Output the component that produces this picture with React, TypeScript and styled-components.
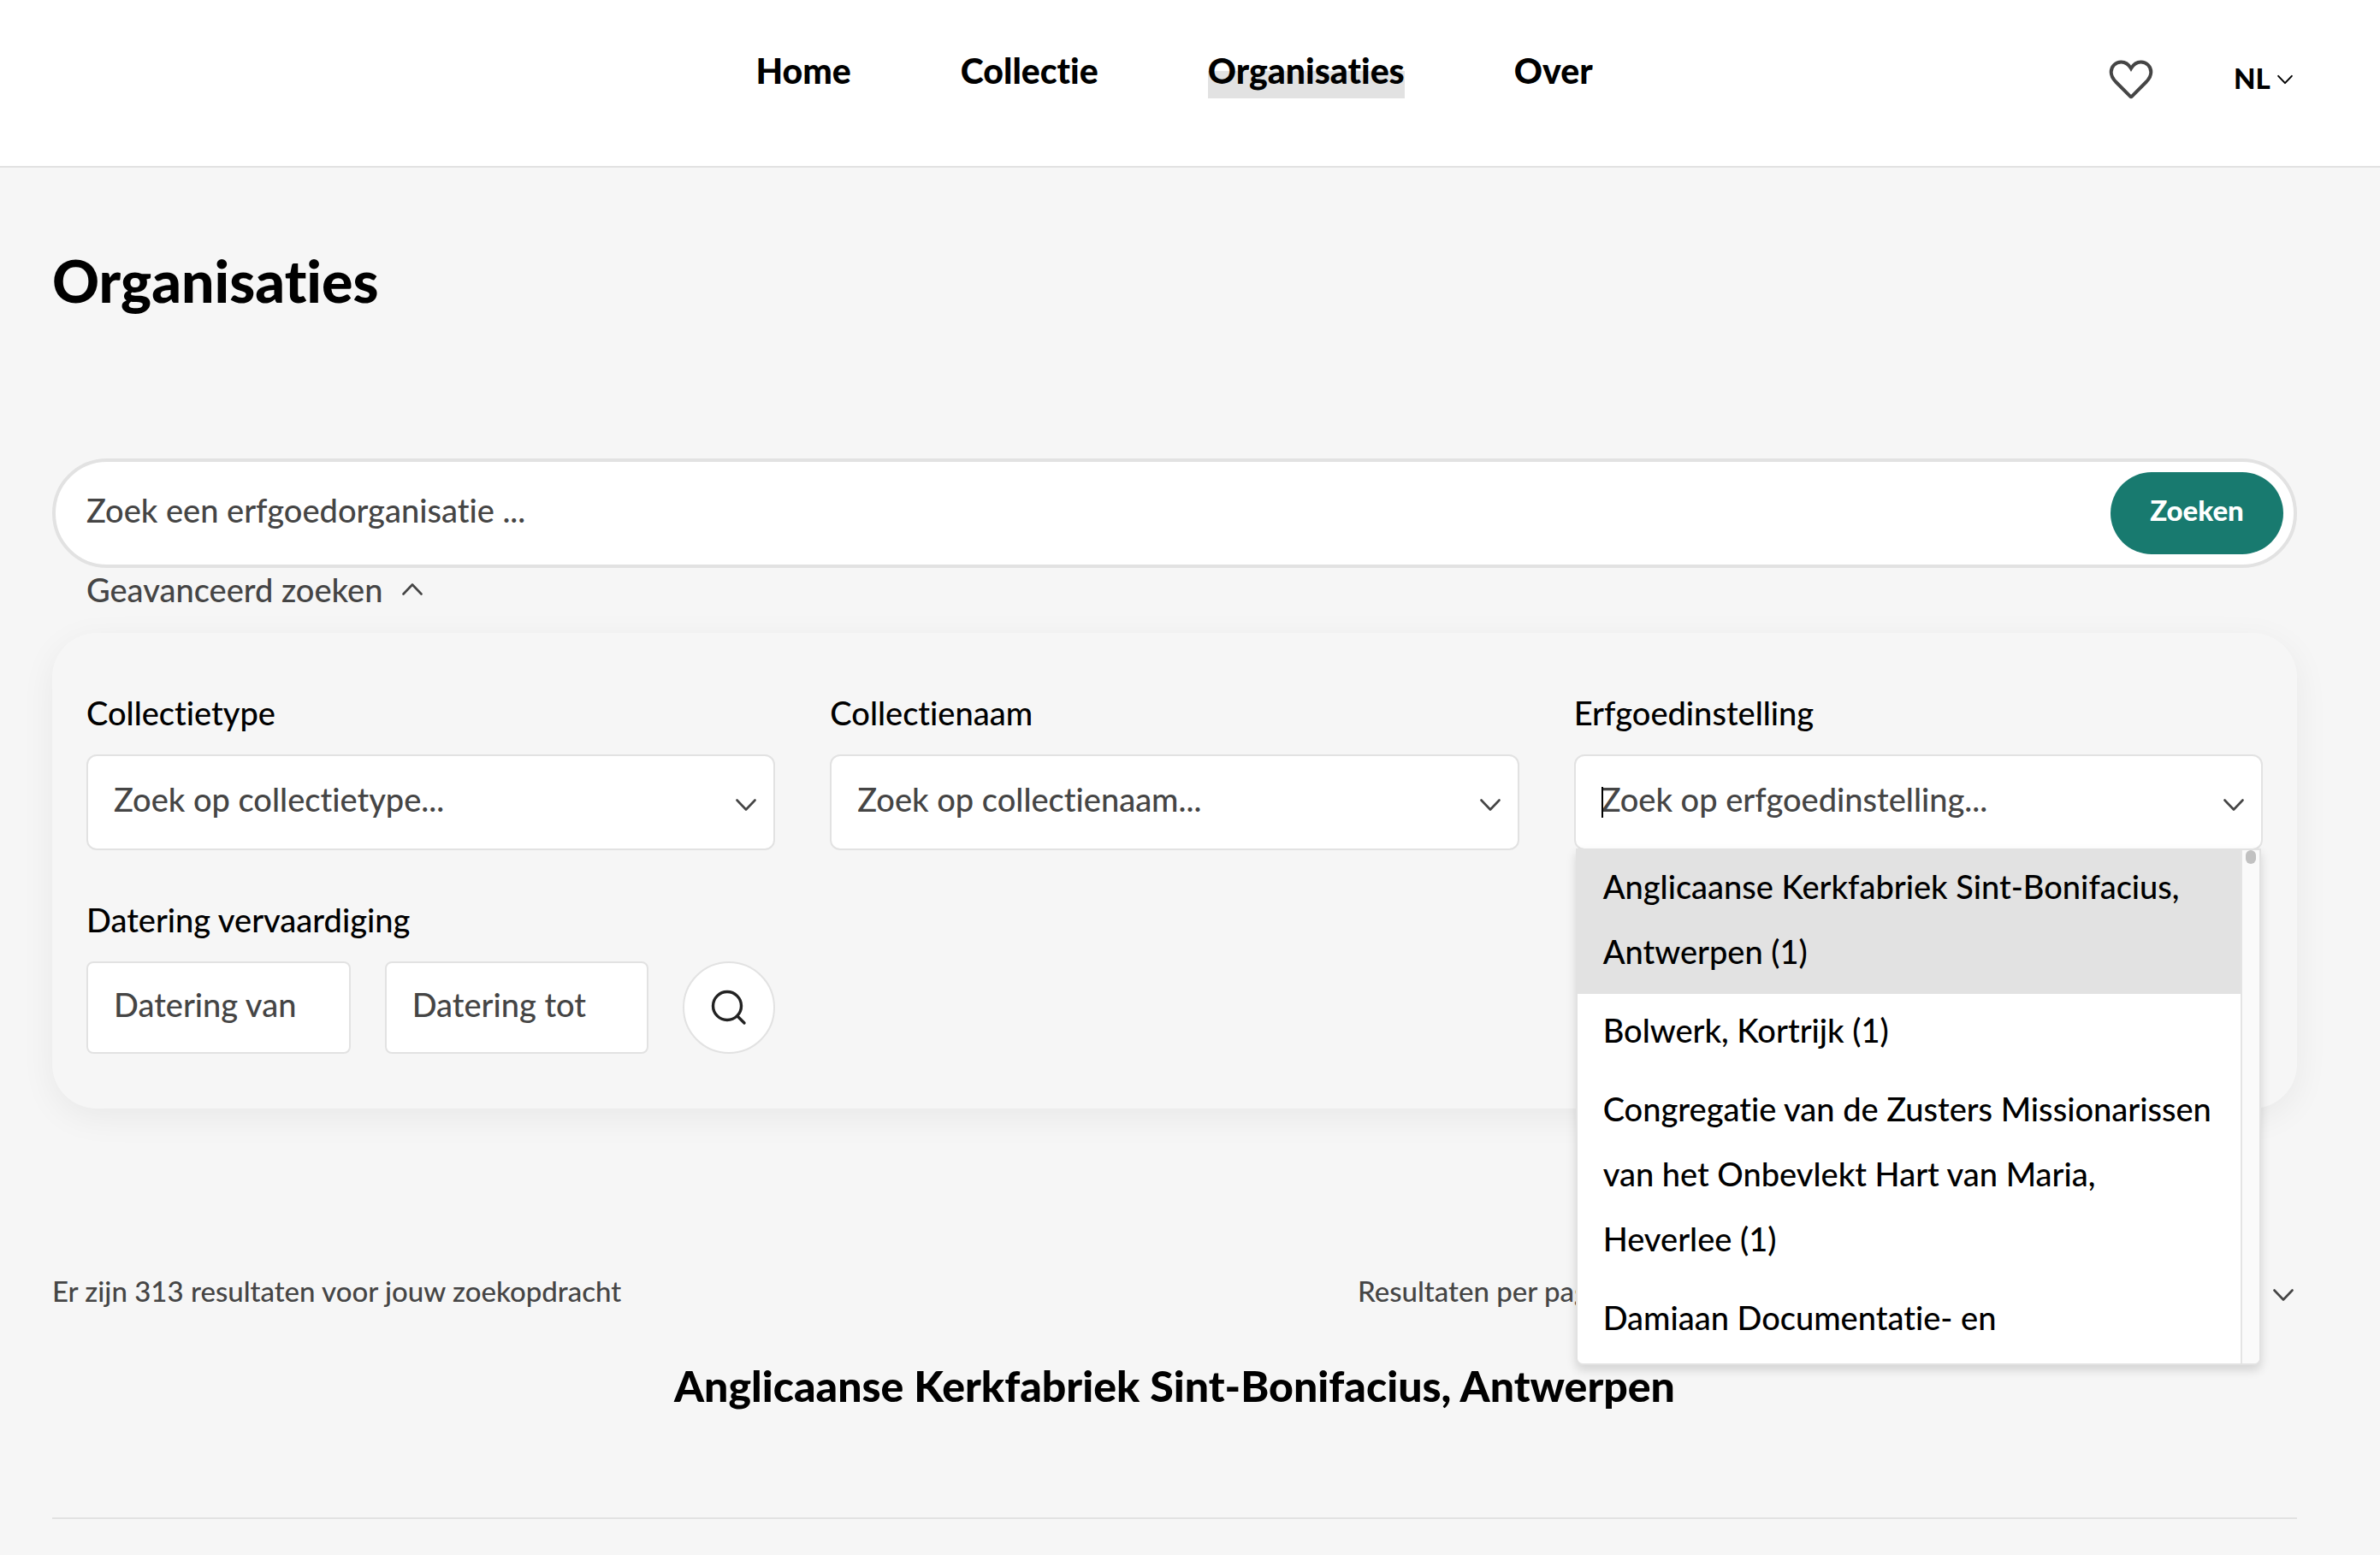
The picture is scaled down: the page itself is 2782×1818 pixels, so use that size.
import { useState } from "react";
import styled, { createGlobalStyle } from "styled-components";

const GlobalStyle = createGlobalStyle`
  :root {
    --text: #000;
    --text-soft: #454545;
    --line: #e2e2e2;
    --background: #f6f6f6;
    --accent: #187a6f;
  }

  *, *::before, *::after {
    box-sizing: border-box;
  }

  body {
    margin: 0;
    min-height: 100vh;
    overflow: hidden;
    background-color: var(--background);
    color: var(--text);
    font-family: Lato, "Open Sans", sans-serif;
    font-size: 38px;
    font-weight: 500;
    font-variant-ligatures: none;
  }

  input, button, select {
    font: inherit;
    font-variant-ligatures: none;
    color: inherit;
    margin: 0;
  }
`;

const Header = styled.header`
  display: grid;
  grid-template-columns: 1fr auto 1fr;
  align-items: start;
  height: 196px;
  padding: 51px 98px 0 61px;
  background-color: #fff;
  border-bottom: 2px solid var(--line);
`;

const Nav = styled.nav`
  grid-column: 2;
  display: flex;
  gap: 128px;
`;

const NavLink = styled.a<{ $active?: boolean }>`
  font-size: 41px;
  font-weight: 900;
  line-height: 64px;
  color: var(--text);
  text-decoration: none;
  background: ${({ $active }) =>
    $active
      ? "linear-gradient(transparent 50%, var(--line) 50%)"
      : "transparent"};
`;

const Actions = styled.div`
  display: flex;
  align-items: center;
  justify-content: flex-end;
  gap: 94px;
  height: 84px;
`;

const IconButton = styled.button`
  display: flex;
  padding: 0;
  border: 0;
  background: none;
`;

const Language = styled.label`
  display: flex;
  align-items: center;
  gap: 8px;
  padding-right: 4px;
`;

const LanguageSelect = styled.select`
  appearance: none;
  padding: 0 0 4px;
  border: 0;
  background: none;
  font-size: 33px;
  font-weight: 900;
`;

const Main = styled.main`
  padding: 92px 97px 0 61px;
`;

const Title = styled.h1`
  margin: 0 0 168px;
  font-size: 68px;
  font-weight: 900;
  line-height: 80px;
`;

const SearchBar = styled.form`
  display: flex;
  height: 128px;
  padding: 12px;
  border: 4px solid var(--line);
  border-radius: 64px;
  background-color: #fff;
`;

const SearchInput = styled.input`
  flex: 1;
  min-width: 0;
  padding: 0 24px 8px;
  border: 0;
  outline: 0;
  background: none;

  &::placeholder {
    color: var(--text-soft);
    opacity: 1;
  }
`;

const SearchButton = styled.button`
  width: 202px;
  padding: 0 0 8px;
  border: 0;
  border-radius: 48px;
  background-color: var(--accent);
  color: #fff;
  font-size: 33px;
  font-weight: 900;
`;

const AdvancedToggle = styled.button`
  display: flex;
  align-items: center;
  gap: 22px;
  margin: 0 0 26px 40px;
  padding: 0;
  border: 0;
  background: none;
  color: var(--text-soft);
  line-height: 50px;
`;

const Filters = styled.section`
  display: grid;
  grid-template-columns: repeat(3, minmax(0, 1fr));
  gap: 56px 64px;
  padding: 68px 40px 64px;
  border-radius: 52px;
  box-shadow: 0 10px 40px rgba(0, 0, 0, 0.06);
`;

const Field = styled.div`
  position: relative;
`;

const FieldLabel = styled.label`
  display: block;
  margin-bottom: 24px;
  line-height: 50px;
`;

const Control = styled.div`
  position: relative;
  display: flex;
  align-items: center;
  height: 112px;
  padding-right: 20px;
  border: 2px solid var(--line);
  border-radius: 12px;
  background-color: #fff;
  color: var(--text-soft);

  svg {
    margin-top: 6px;
  }
`;

const ControlInput = styled.input`
  flex: 1;
  min-width: 0;
  height: 100%;
  padding: 0 0 8px 30px;
  border: 0;
  outline: 0;
  background: none;

  &::placeholder {
    color: var(--text-soft);
    opacity: 1;
  }
`;

const Caret = styled.span`
  position: absolute;
  left: 30px;
  top: 36px;
  width: 2px;
  height: 36px;
  background-color: var(--text);
`;

const Dropdown = styled.div`
  position: absolute;
  z-index: 1;
  top: 100%;
  left: 2px;
  right: 2px;
  display: flex;
  height: 604px;
  margin-top: -2px;
  border: 2px solid var(--line);
  border-radius: 0 0 8px 8px;
  background-color: #fff;
  box-shadow: 0 6px 12px rgba(0, 0, 0, 0.14);
  overflow: hidden;
`;

const Options = styled.ul`
  flex: 1;
  margin: 0;
  padding: 0;
  list-style: none;
`;

const Option = styled.li`
  padding: 4px 30px 12px;
  line-height: 76px;

  &[aria-selected="true"] {
    background-color: var(--line);
  }
`;

const ScrollTrack = styled.div`
  width: 22px;
  border-left: 2px solid #e4e4e4;
  background-color: #fafafa;
`;

const ScrollThumb = styled.div`
  width: 12px;
  height: 16px;
  margin: 0 auto;
  border-radius: 6px;
  background-color: #c1c1c1;
`;

const DateRow = styled.div`
  display: flex;
  gap: 40px;
`;

const DateInput = styled.input`
  flex: 1;
  min-width: 0;
  height: 108px;
  padding: 0 30px 8px;
  border: 2px solid var(--line);
  border-radius: 8px;
  background-color: #fff;

  &::placeholder {
    color: var(--text-soft);
    opacity: 1;
  }
`;

const RoundButton = styled.button`
  display: grid;
  place-items: center;
  width: 108px;
  height: 108px;
  padding: 0;
  border: 2px solid var(--line);
  border-radius: 50%;
  background-color: #fff;
`;

const ResultsBar = styled.div`
  display: flex;
  justify-content: space-between;
  margin-top: 188px;
  font-size: 33px;
  line-height: 50px;
  color: var(--text-soft);
`;

const PageSize = styled.div`
  display: flex;
  align-items: center;
  width: 1098px;
  padding-right: 4px;

  svg {
    margin-top: 10px;
  }
`;

const PageSizeSelect = styled.select`
  flex: 1;
  appearance: none;
  padding: 0 16px;
  border: 0;
  background: none;
`;

const ResultTitle = styled.h2`
  margin: 54px 0 0;
  padding-bottom: 122px;
  border-bottom: 2px solid var(--line);
  font-size: 50px;
  font-weight: 900;
  line-height: 64px;
  text-align: center;
`;

const Chevron = ({ up, small }: { up?: boolean; small?: boolean }) => (
  <svg
    width={small ? 18 : 24}
    height={small ? 12 : 16}
    viewBox="0 0 24 16"
    fill="none"
    stroke="currentColor"
    strokeWidth="2.6"
    strokeLinecap="round"
    strokeLinejoin="round"
    aria-hidden="true"
  >
    <path d={up ? "M1.5 13.5 12 2.5l10.5 11" : "M1.5 2.5 12 13.5l10.5-11"} />
  </svg>
);

const HeartIcon = () => (
  <svg
    width="52"
    height="46"
    viewBox="0 0 52 46"
    fill="none"
    stroke="#454545"
    strokeWidth="4"
    aria-hidden="true"
  >
    <path d="M26 10C23 5 19 2.500 14.500 2.500 8 2.500 2.700 7.500 2.700 14.300c0 4.700 2.300 8 5.300 11.200L25 42.700c.6.600 1.400.6 2 0l17-17.200c3-3.200 5.300-6.500 5.300-11.200 0-6.800-5.300-11.800-11.800-11.800C33 2.500 29 5 26 10Z" />
  </svg>
);

const SearchIcon = () => (
  <svg
    width="42"
    height="42"
    viewBox="0 0 42 42"
    fill="none"
    stroke="#222"
    strokeWidth="3.4"
    strokeLinecap="round"
    aria-hidden="true"
  >
    <circle cx="19" cy="19" r="16.5" />
    <path d="m31 31 8 8" />
  </svg>
);

const navItems = ["Home", "Collectie", "Organisaties", "Over"];

const institutions = [
  "Anglicaanse Kerkfabriek Sint-Bonifacius, Antwerpen (1)",
  "Bolwerk, Kortrijk (1)",
  "Congregatie van de Zusters Missionarissen van het Onbevlekt Hart van Maria, Heverlee (1)",
  "Damiaan Documentatie- en",
];

const Combobox = ({
  id,
  label,
  placeholder,
  options,
}: {
  id: string;
  label: string;
  placeholder: string;
  options?: string[];
}) => {
  const [selected, setSelected] = useState(0);

  return (
    <Field>
      <FieldLabel htmlFor={id}>{label}</FieldLabel>
      <Control>
        <ControlInput
          id={id}
          type="text"
          role="combobox"
          aria-expanded={!!options}
          placeholder={placeholder}
        />
        {options && <Caret />}
        <Chevron />
      </Control>
      {options && (
        <Dropdown>
          <Options role="listbox" aria-label={label}>
            {options.map((option, i) => (
              <Option
                key={option}
                role="option"
                aria-selected={i === selected}
                onMouseEnter={() => setSelected(i)}
              >
                {option}
              </Option>
            ))}
          </Options>
          <ScrollTrack>
            <ScrollThumb />
          </ScrollTrack>
        </Dropdown>
      )}
    </Field>
  );
};

const App = () => {
  const [open, setOpen] = useState(true);

  return (
    <>
      <GlobalStyle />
      <Header>
        <Nav>
          {navItems.map((item) => (
            <NavLink key={item} href="#" $active={item === "Organisaties"}>
              {item}
            </NavLink>
          ))}
        </Nav>
        <Actions>
          <IconButton type="button" aria-label="Favorieten">
            <HeartIcon />
          </IconButton>
          <Language>
            <LanguageSelect aria-label="Taal">
              <option>NL</option>
            </LanguageSelect>
            <Chevron small />
          </Language>
        </Actions>
      </Header>
      <Main>
        <Title>Organisaties</Title>
        <SearchBar onSubmit={(e) => e.preventDefault()}>
          <SearchInput
            type="text"
            aria-label="Zoek een erfgoedorganisatie"
            placeholder="Zoek een erfgoedorganisatie ..."
          />
          <SearchButton type="submit">Zoeken</SearchButton>
        </SearchBar>
        <AdvancedToggle
          type="button"
          aria-expanded={open}
          onClick={() => setOpen(!open)}
        >
          Geavanceerd zoeken
          <Chevron up={open} />
        </AdvancedToggle>
        {open && (
          <Filters>
            <Combobox
              id="type"
              label="Collectietype"
              placeholder="Zoek op collectietype..."
            />
            <Combobox
              id="name"
              label="Collectienaam"
              placeholder="Zoek op collectienaam..."
            />
            <Combobox
              id="institution"
              label="Erfgoedinstelling"
              placeholder="Zoek op erfgoedinstelling..."
              options={institutions}
            />
            <Field>
              <FieldLabel htmlFor="from">Datering vervaardiging</FieldLabel>
              <DateRow>
                <DateInput id="from" type="text" placeholder="Datering van" />
                <DateInput
                  type="text"
                  aria-label="Datering tot"
                  placeholder="Datering tot"
                />
                <RoundButton type="button" aria-label="Zoek op datering">
                  <SearchIcon />
                </RoundButton>
              </DateRow>
            </Field>
          </Filters>
        )}
        <ResultsBar>
          <span>Er zijn 313 resultaten voor jouw zoekopdracht</span>
          <PageSize>
            <label htmlFor="page-size">Resultaten per pagina</label>
            <PageSizeSelect id="page-size">
              <option>20</option>
            </PageSizeSelect>
            <Chevron />
          </PageSize>
        </ResultsBar>
        <ResultTitle>
          Anglicaanse Kerkfabriek Sint-Bonifacius, Antwerpen
        </ResultTitle>
      </Main>
    </>
  );
};

export default App;
